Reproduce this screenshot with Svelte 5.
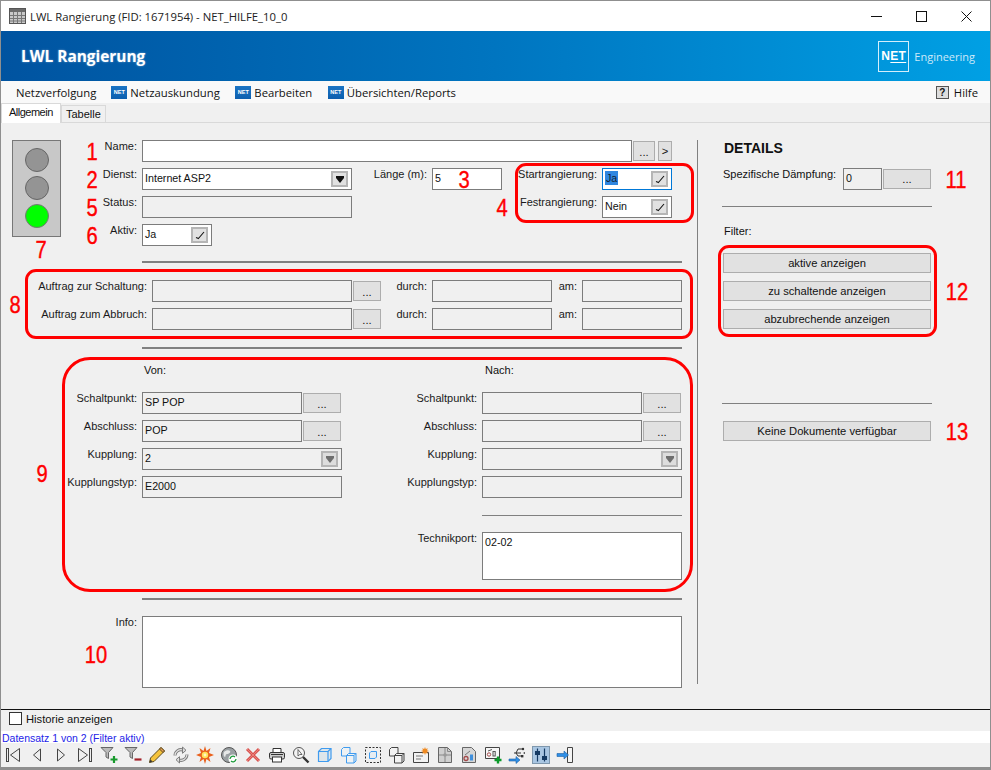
<script>
  let historie = $state(false);
  const menu = ['Netzauskundung', 'Bearbeiten', 'Übersichten/Reports'];
  const filters = ['aktive anzeigen', 'zu schaltende anzeigen', 'abzubrechende anzeigen'];
  const marks = [
    ['1', 91, 151], ['2', 91, 179], ['5', 91, 207], ['6', 91, 235], ['7', 40, 249],
    ['3', 463, 179], ['4', 501, 207], ['8', 14, 304], ['9', 41, 473], ['10', 95, 654],
    ['11', 955, 179], ['12', 956, 291], ['13', 956, 431]
  ];
</script>

{#snippet drop(dim)}
  <span class="pick" class:dim>
    <svg width="8" height="7" viewBox="0 0 8 7"><path d="M0 0h8v2L4 7 0 2z" fill="currentColor" /></svg>
  </span>
{/snippet}

{#snippet check()}
  <span class="pick">
    <svg width="10" height="10" viewBox="0 0 10 10"><path d="M1 7.500 L3.500 8.500 M3 9 L9 2" stroke="#111" stroke-width="1.100" fill="none" /></svg>
  </span>
{/snippet}

{#snippet more()}
  <button class="btn dots">...</button>
{/snippet}

{#snippet netIcon()}
  <span class="net-icon">NET</span>
{/snippet}

<div class="window">
  <header class="titlebar">
    <svg class="app-icon" width="17" height="16" viewBox="0 0 17 16">
      <rect x="0.5" y="0.5" width="16" height="15" fill="#c9c9c9" stroke="#555" />
      <rect x="1" y="1" width="15" height="3" fill="#6b6b6b" />
      <path d="M4.5 4v11M8.5 4v11M12.5 4v11M1 7.5h15M1 10.5h15M1 13h15" stroke="#777" stroke-width="1" />
    </svg>
    <span class="wintitle">LWL Rangierung (FID: 1671954) - NET_HILFE_10_0</span>
    <div class="winctl">
      <svg width="11" height="11" viewBox="0 0 11 11"><path d="M0 5.5h11" stroke="#111" /></svg>
      <svg width="11" height="11" viewBox="0 0 11 11"><rect x="0.5" y="0.5" width="10" height="10" fill="none" stroke="#111" /></svg>
      <svg width="11" height="11" viewBox="0 0 11 11"><path d="M0.5 0.5l10 10M10.5 0.5l-10 10" stroke="#111" /></svg>
    </div>
  </header>

  <div class="banner">
    <h1>LWL Rangierung</h1>
    <div class="logo">
      <div class="logo-box"><span>N<u>ET</u></span></div>
      <span class="logo-word">Engineering</span>
    </div>
  </div>

  <nav class="menubar">
    <span class="menu-first">Netzverfolgung</span>
    {#each menu as item}
      <span class="menu-item">{@render netIcon()}{item}</span>
    {/each}
    <span class="help"><span class="help-icon">?</span>Hilfe</span>
  </nav>

  <div class="tabs">
    <span class="tab active">Allgemein</span>
    <span class="tab">Tabelle</span>
  </div>

  <main class="page">
    <section class="left">
      <div class="top">
        <div class="light">
          <i></i><i></i><i class="on"></i>
        </div>
        <div class="top-fields">
          <div class="row">
            <span class="lbl w60">Name:</span>
            <span class="field white name"></span>
            <button class="btn dots small">...</button>
            <button class="btn next">&gt;</button>
          </div>
          <div class="row">
            <span class="lbl w60">Dienst:</span>
            <span class="field white w210">Internet ASP2 {@render drop(false)}</span>
            <span class="lbl w76">Länge (m):</span>
            <span class="field white w70 tight">5</span>
            <span class="lbl w100">Startrangierung:</span>
            <span class="field white w70 tight focus"><span class="sel">Ja</span> {@render check()}</span>
          </div>
          <div class="row">
            <span class="lbl w60">Status:</span>
            <span class="field w210"></span>
            <span class="lbl w250">Festrangierung:</span>
            <span class="field white w70 tight">Nein {@render check()}</span>
          </div>
          <div class="row">
            <span class="lbl w60">Aktiv:</span>
            <span class="field white w70">Ja {@render check()}</span>
          </div>
        </div>
      </div>

      <hr class="rule first" />

      <div class="orders">
        {#each ['Auftrag zur Schaltung:', 'Auftrag zum Abbruch:'] as label}
          <div class="row">
            <span class="lbl w147">{label}</span>
            <span class="field w200"></span>
            {@render more()}
            <span class="lbl w46">durch:</span>
            <span class="field w120"></span>
            <span class="lbl w30">am:</span>
            <span class="field w100"></span>
          </div>
        {/each}
      </div>

      <hr class="rule second" />

      <div class="ends">
        <div class="end">
          <div class="end-head">Von:</div>
          <div class="row"><span class="lbl w136">Schaltpunkt:</span><span class="field w160">SP POP</span>{@render more()}</div>
          <div class="row"><span class="lbl w136">Abschluss:</span><span class="field w160">POP</span>{@render more()}</div>
          <div class="row"><span class="lbl w136">Kupplung:</span><span class="field w200">2 {@render drop(true)}</span></div>
          <div class="row"><span class="lbl w136">Kupplungstyp:</span><span class="field w200">E2000</span></div>
        </div>
        <div class="end">
          <div class="end-head">Nach:</div>
          <div class="row"><span class="lbl w134">Schaltpunkt:</span><span class="field w160"></span>{@render more()}</div>
          <div class="row"><span class="lbl w134">Abschluss:</span><span class="field w160"></span>{@render more()}</div>
          <div class="row"><span class="lbl w134">Kupplung:</span><span class="field w200">{@render drop(true)}</span></div>
          <div class="row"><span class="lbl w134">Kupplungstyp:</span><span class="field w200"></span></div>
          <hr class="thin tech-rule" />
          <div class="row tall"><span class="lbl w134">Technikport:</span><span class="field white w200 area">02-02</span></div>
        </div>
      </div>

      <hr class="rule third" />

      <div class="row info"><span class="lbl w136">Info:</span><span class="field white w540"></span></div>
    </section>

    <div class="divider"></div>

    <aside class="details">
      <h2>DETAILS</h2>
      <div class="row damp">
        <span class="damp-lbl">Spezifische Dämpfung:</span>
        <span class="field w40">0</span>
        <button class="btn side">...</button>
      </div>
      <hr class="thin" />
      <div class="filter-lbl">Filter:</div>
      <div class="filters">
        {#each filters as f}
          <button class="btn wide">{f}</button>
        {/each}
      </div>
      <hr class="thin docs-rule" />
      <button class="btn wide">Keine Dokumente verfügbar</button>
    </aside>
  </main>

  <div class="history">
    <input type="checkbox" bind:checked={historie} />
    <span>Historie anzeigen</span>
  </div>
  <div class="record">Datensatz 1 von 2 (Filter aktiv)</div>

  <div class="toolbar">
    <span class="tb"><svg width="18" height="18" viewBox="0 0 18 18"><rect x="2.5" y="2.5" width="2" height="13" fill="#eee" stroke="#444" /><path d="M15.5 2.5 L6.5 9 15.5 15.5z" fill="#eee" stroke="#444" /></svg></span>
    <span class="tb"><svg width="18" height="18" viewBox="0 0 18 18"><path d="M12.5 3 L5.5 9 12.5 15z" fill="#eee" stroke="#444" /></svg></span>
    <span class="tb"><svg width="18" height="18" viewBox="0 0 18 18"><path d="M5.5 3 L12.5 9 5.5 15z" fill="#eee" stroke="#444" /></svg></span>
    <span class="tb"><svg width="18" height="18" viewBox="0 0 18 18"><path d="M2.5 2.5 L11.5 9 2.5 15.5z" fill="#eee" stroke="#444" /><rect x="13.5" y="2.5" width="2" height="13" fill="#eee" stroke="#444" /></svg></span>
    <span class="tb"><svg width="18" height="18" viewBox="0 0 18 18"><path d="M1 1.5h12L8.5 6.5v6L6 11V6.5z" fill="#bbb" stroke="#666" /><path d="M14 10v7M10.5 13.5h7" stroke="#17992c" stroke-width="2.2" /></svg></span>
    <span class="tb"><svg width="18" height="18" viewBox="0 0 18 18"><path d="M1 1.5h12L8.5 6.5v6L6 11V6.5z" fill="#bbb" stroke="#666" /><path d="M10.5 13.5h7" stroke="#a3222a" stroke-width="2.2" /></svg></span>
    <span class="tb"><svg width="18" height="18" viewBox="0 0 18 18"><path d="M13 1.5l3.5 3.5L6 15.5 1.5 16.5 2.5 12z" fill="#f5c33b" stroke="#5b4a1e" /><path d="M13 1.5l3.5 3.5-1.5 1.5L11.5 3z" fill="#e8a05a" stroke="#5b4a1e" /><path d="M1.5 16.5l1-3 2 2z" fill="#333" /></svg></span>
    <span class="tb"><svg width="18" height="18" viewBox="0 0 18 18" fill="none"><g stroke="#7d7d7d" stroke-width="3"><path d="M3 9.500a6 6 0 0 1 8-5.500" /><path d="M15 8.500a6 6 0 0 1-8 5.500" /></g><g stroke="#e2e2e2" stroke-width="1.200"><path d="M3 9.500a6 6 0 0 1 8-5.500" /><path d="M15 8.500a6 6 0 0 1-8 5.500" /></g><path d="M10.500 1l3.500 3.300-3.500 3z" fill="#ddd" stroke="#7d7d7d" /><path d="M7.500 17L4 13.700l3.500-3z" fill="#ddd" stroke="#7d7d7d" /></svg></span>
    <span class="tb"><svg width="18" height="18" viewBox="0 0 18 18"><path d="M9 0l1.500 5L14.500 2l-1.500 5 5 2-5 2 1.500 5-4-3L9 18l-1.500-5-4 3L5 11 0 9l5-2-1.500-5 4 3z" fill="#e9601c" /><circle cx="9" cy="9" r="3.200" fill="#ffe25a" /><circle cx="9" cy="9" r="1.400" fill="#fff6c8" /></svg></span>
    <span class="tb"><svg width="18" height="18" viewBox="0 0 18 18"><circle cx="9" cy="9" r="7.500" fill="#9aa0a3" stroke="#555" /><path d="M4 6c2-2 5-2 6-1s-1 3-3 3-1 3-2 3-2-3-1-5z" fill="#e6e8e8" /><circle cx="13" cy="13" r="4.500" fill="#fff" /><path d="M10 13a3 3 0 0 1 5-2M16 13a3 3 0 0 1-5 2" fill="none" stroke="#1c9a3a" stroke-width="1.300" /></svg></span>
    <span class="tb"><svg width="18" height="18" viewBox="0 0 18 18"><path d="M3 3l12 12M15 3L3 15" stroke="#d9534f" stroke-width="3" /><path d="M3 3l12 12M15 3L3 15" stroke="#ee8a85" stroke-width="0.800" /></svg></span>
    <span class="tb"><svg width="18" height="18" viewBox="0 0 18 18"><path d="M5 7V2.500h8V7" fill="#fff" stroke="#333" /><rect x="1.500" y="6.500" width="15" height="6.500" rx="1.500" fill="#ccc" stroke="#333" /><rect x="4.500" y="11" width="9" height="5" fill="#fff" stroke="#333" /><path d="M3 8.500h12" stroke="#333" /></svg></span>
    <span class="tb"><svg width="18" height="18" viewBox="0 0 18 18"><circle cx="7" cy="7" r="5.500" fill="#f4f4f4" stroke="#555" /><path d="M6 3.500v6.500l1.800-1.500h2.200z" fill="#fff" stroke="#444" stroke-width="0.800" /><path d="M11 11l5.500 5.500" stroke="#333" stroke-width="2.400" /></svg></span>
    <span class="tb"><svg width="18" height="18" viewBox="0 0 18 18"><path d="M2.500 5.500l3-3h9.500v10l-3 3H2.500z" fill="#dfe6ea" stroke="#3f9bef" stroke-width="1.200" /><path d="M2.500 5.500h9.500v10M12 5.500l3-3" fill="none" stroke="#3f9bef" stroke-width="1.200" /></svg></span>
    <span class="tb"><svg width="18" height="18" viewBox="0 0 18 18" fill="#eef2f4" stroke="#3f9bef"><path d="M1.500 3.500l2-2h6.500v6.500l-2 2H1.500z" /><path d="M6.500 9.500l2-2h7.500v7.500l-2 2H6.500z" /><path d="M6.500 9.500h7.500v7.500M14 9.500l2-2" fill="none" /></svg></span>
    <span class="tb"><svg width="18" height="18" viewBox="0 0 18 18"><rect x="1.500" y="1.500" width="15" height="15" fill="none" stroke="#333" stroke-dasharray="2 1.500" /><path d="M5.500 7l1.500-1.500h5.500V11L11 12.500H5.500z" fill="#e6edf2" stroke="#3f9bef" /></svg></span>
    <span class="tb"><svg width="18" height="18" viewBox="0 0 18 18" fill="#f2f2f2" stroke="#444"><path d="M1.500 3.500l2-2h6.500v6.500l-2 2H1.500z" /><path d="M6.500 9.500l2-2h7.500v7.500l-2 2H6.500z" /><path d="M6.500 9.500h7.500v7.500M14 9.500l2-2" fill="none" /></svg></span>
    <span class="tb"><svg width="18" height="18" viewBox="0 0 18 18"><path d="M1.500 6.500h15v10h-15z" fill="#f2f2f2" stroke="#444" /><path d="M4 10h7M4 13h5" stroke="#777" /><path d="M13 1l.8 2 2-.8-.8 2 2 .8-2 .8.800 2-2-.8-.8 2-.8-2-2 .8.800-2-2-.8 2-.8-.8-2 2 .8z" fill="#ef8a22" /></svg></span>
    <span class="tb"><svg width="18" height="18" viewBox="0 0 18 18"><path d="M2.500 1.500h9l4 4v11h-13z" fill="#cfcfcf" stroke="#666" /><path d="M11.500 1.500v4h4M9 2v14M3 9h12" fill="none" stroke="#888" /><circle cx="9" cy="9" r="1.800" fill="#999" /></svg></span>
    <span class="tb"><svg width="18" height="18" viewBox="0 0 18 18"><path d="M2.500 1.500h9l4 4v11h-13z" fill="#d6d6d6" stroke="#666" /><circle cx="6" cy="12.500" r="2" fill="none" stroke="#a34a4a" stroke-width="1.300" /><rect x="10" y="8.500" width="3" height="6" fill="#3f8fdc" /><path d="M5 9l5-4" stroke="#777" /></svg></span>
    <span class="tb"><svg width="18" height="18" viewBox="0 0 18 18"><path d="M1.500 1.500h14v11h-14z" fill="#f6f6f6" stroke="#444" /><circle cx="5" cy="8.500" r="1.700" fill="none" stroke="#a34a4a" /><rect x="9" y="5.500" width="2.200" height="4.500" fill="none" stroke="#555" /><path d="M4 5l4-1.500" stroke="#555" /><path d="M14 10.500v7M10.500 14h7" stroke="#0a9a2a" stroke-width="2.400" /></svg></span>
    <span class="tb"><svg width="18" height="18" viewBox="0 0 18 18"><path d="M6 7h7M8 7l2-4h4M8 7l2 3h3" fill="none" stroke="#333" /><circle cx="15" cy="3" r="1.200" fill="#333" /><rect x="13" y="9" width="2.400" height="2.400" fill="#333" /><path d="M15 7l2-1v2z" fill="#333" /><path d="M1 13h7V10.500l4 3.500-4 3.500V15H1z" fill="#2f8fe6" stroke="#1c5fa5" stroke-width="0.600" /></svg></span>
    <span class="tb"><svg width="18" height="18" viewBox="0 0 18 18"><rect x="0.500" y="0.500" width="17" height="17" fill="#a9c6e2" stroke="#7e97ad" /><path d="M5.500 2.500v13M12.500 2.500v13" stroke="#153a63" stroke-width="1.200" /><rect x="3" y="5" width="5" height="4" fill="#153a63" /><rect x="10" y="10" width="5" height="4" fill="#153a63" /></svg></span>
    <span class="tb"><svg width="18" height="18" viewBox="0 0 18 18"><path d="M11.500 1.500h5v15h-5" fill="#f4f4f4" stroke="#444" /><path d="M11.500 1.500v15" stroke="#444" /><path d="M1 7.500h7V5l4.500 4L8 13v-2.500H1z" fill="#2f8fe6" stroke="#1c5fa5" stroke-width="0.600" /></svg></span>
  </div>

  <!-- Callouts drawn on top of the screenshot -->
  <div class="frame f4"></div>
  <div class="frame f8"></div>
  <div class="frame f9"></div>
  <div class="frame f12"></div>
  {#each marks as [n, x, y]}
    <span class="mark" style="left:{x}px;top:{y}px">{n}</span>
  {/each}
</div>

<style>
  :global(body) {
    margin: 0;
    background: #f0f0f0;
  }

  .window {
    position: relative;
    box-sizing: border-box;
    width: 991px;
    height: 770px;
    display: flex;
    flex-direction: column;
    overflow: hidden;
    border: 1px solid #8f8f8f;
    border-bottom-width: 3px;
    background: #f0f0f0;
    color: #111;
    font-family: "Liberation Sans", Arial, sans-serif;
    font-size: 11px;
  }

  .titlebar {
    height: 30px;
    flex: none;
    display: flex;
    align-items: center;
    background: #fff;
    font-family: "Open Sans", sans-serif;
    font-size: 11.3px;
  }

  .app-icon {
    margin-left: 8px;
    margin-right: 4px;
  }

  .wintitle {
    color: #222;
  }

  .winctl {
    margin-left: auto;
    margin-right: 18px;
    display: flex;
    gap: 34px;
  }

  .banner {
    height: 50px;
    flex: none;
    display: flex;
    align-items: center;
    justify-content: space-between;
    background: linear-gradient(90deg, #0053a0 0%, #0075c0 50%, #00a0e4 100%);
    color: #fff;
  }

  h1 {
    margin: 0 0 0 20px;
    font-family: "Open Sans", sans-serif;
    font-size: 15.4px;
    font-weight: 700;
    text-shadow: 0 0 2px rgba(255, 255, 255, 0.5);
  }

  .logo {
    display: flex;
    align-items: center;
    gap: 5px;
    margin-right: 15px;
  }

  .logo-box {
    box-sizing: border-box;
    width: 31px;
    height: 31px;
    border: 1px solid #d4eefb;
    display: flex;
    align-items: center;
    justify-content: center;
    font-weight: 700;
    font-size: 12px;
    letter-spacing: 0.3px;
  }

  .logo-box u {
    text-underline-offset: 2px;
  }

  .logo-word {
    font-family: "Open Sans", sans-serif;
    font-size: 11px;
    color: #cde9f9;
  }

  .menubar {
    height: 22px;
    flex: none;
    display: flex;
    align-items: center;
    background: #f9f9f9;
    font-family: "Open Sans", sans-serif;
    font-size: 11.3px;
    color: #111;
  }

  .menu-first {
    margin-left: 15px;
    margin-right: 15px;
  }

  .menu-item {
    display: flex;
    align-items: center;
    gap: 3px;
    margin-right: 15.5px;
  }

  .net-icon {
    box-sizing: border-box;
    width: 16px;
    height: 13px;
    background: linear-gradient(180deg, #1a74c4 0%, #0d5fae 100%);
    color: #fff;
    font-family: "Liberation Sans", sans-serif;
    font-size: 5.5px;
    font-weight: 700;
    line-height: 13px;
    text-align: center;
  }

  .help {
    margin-left: auto;
    margin-right: 12px;
    display: flex;
    align-items: center;
    gap: 5px;
  }

  .help-icon {
    box-sizing: border-box;
    width: 13px;
    height: 13px;
    border: 1px solid #555;
    background: #ddd;
    font: 700 10px/11px "Liberation Sans", sans-serif;
    text-align: center;
  }

  .tabs {
    height: 20px;
    flex: none;
    display: flex;
    align-items: flex-end;
    box-sizing: border-box;
    border-bottom: 1px solid #d9d9d9;
    font-size: 11px;
  }

  .tab {
    box-sizing: border-box;
    height: 17px;
    padding: 0 4px;
    line-height: 16px;
    border: 1px solid #d9d9d9;
    border-bottom: none;
    background: #f0f0f0;
  }

  .tab.active {
    height: 20px;
    width: 60px;
    padding: 0 0 0 7px;
    margin-bottom: -1px;
    line-height: 17px;
    letter-spacing: -0.5px;
    background: #fff;
    border-right: 1px solid #d9d9d9;
  }

  .page {
    flex: none;
    height: 587px;
    display: flex;
    box-sizing: border-box;
    border-bottom: 1px solid #111;
  }

  .left {
    box-sizing: border-box;
    width: 696px;
    padding-top: 17px;
  }

  .row {
    display: flex;
    height: 22px;
    margin-bottom: 6px;
  }

  .lbl {
    flex: none;
    box-sizing: border-box;
    padding-right: 5px;
    text-align: right;
    line-height: 12px;
    white-space: nowrap;
    color: #1a1a1a;
  }

  .w60 { width: 65px; }
  .w76 { width: 80px; }
  .w100 { width: 100px; }
  .w250 { width: 250px; }
  .w147 { width: 151px; }
  .w46 { width: 51px; }
  .w30 { width: 30px; }
  .w136 { width: 141px; }
  .w134 { width: 140px; }

  .field {
    flex: none;
    box-sizing: border-box;
    display: flex;
    align-items: center;
    height: 22px;
    padding: 0 2px 2px;
    border: 1px solid #7c7c7c;
    position: relative;
    font-size: 10.7px;
    white-space: pre;
  }

  .white { background: #fff; }
  .name { width: 490px; }
  .w210 { width: 210px; }
  .w70 { width: 70px; }
  .w200 { width: 200px; }
  .w160 { width: 160px; }
  .w120 { width: 120px; }
  .w100.field { width: 100px; }
  .w40 { width: 39px; }
  .w540 { width: 540px; }

  .tight { padding-left: 2px; }
  .focus { border-color: #0078d7; }

  .sel {
    background: #2f86e0;
    color: #123;
    padding: 0 1px;
    line-height: 14px;
  }

  .pick {
    box-sizing: border-box;
    position: absolute;
    right: 3px;
    top: 2px;
    width: 17px;
    height: 16px;
    display: flex;
    align-items: center;
    justify-content: center;
    background: #e1e1e1;
    border: 2px solid #b5b5b5;
    color: #111;
  }

  .pick.dim {
    color: #6f6f6f;
    background: #ddd;
  }

  .btn {
    flex: none;
    box-sizing: border-box;
    height: 20px;
    margin: 1px 0 0 1px;
    padding: 0;
    border: 1px solid #adadad;
    background: #e1e1e1;
    font-family: "Liberation Sans", Arial, sans-serif;
    font-size: 11.2px;
    color: #111;
  }

  .dots {
    width: 28px;
    line-height: 20px;
  }

  .ends .dots { width: 38px; }
  .dots.small { width: 22px; margin-left: 1px; }
  .next { width: 14px; margin-left: 3px; }

  .top {
    display: flex;
  }

  .light {
    box-sizing: border-box;
    flex: none;
    width: 49px;
    height: 97px;
    margin: 0 -37px 0 11px;
    border: 1px solid #777;
    background: #c8c8c8;
    display: flex;
    flex-direction: column;
    align-items: center;
    gap: 4px;
    padding-top: 7px;
  }

  .light i {
    box-sizing: border-box;
    width: 24px;
    height: 24px;
    border-radius: 50%;
    background: #949494;
    border: 1px solid #666;
  }

  .light i.on {
    background: #00ff00;
    border-color: #777;
  }

  .top-fields {
    margin-left: 53px;
    flex: 1;
    min-width: 0;
  }

  .rule {
    height: 2px;
    width: 540px;
    margin: 0 0 0 141px;
    border: none;
    background: #808080;
  }

  .rule.first { margin-top: 9px; }
  .rule.second { margin-top: 17px; }

  .orders {
    padding-top: 17px;
  }

  .ends {
    display: grid;
    grid-template-columns: 341px 341px;
    align-items: start;
    height: 249px;
  }

  .end-head {
    height: 43px;
    padding: 15px 0 0 143px;
    box-sizing: border-box;
    line-height: 12px;
  }

  .thin {
    height: 1px;
    margin: 0;
    border: none;
    background: #808080;
  }

  .tech-rule {
    width: 200px;
    margin: 17px 0 16px 140px;
  }

  .tall {
    height: 48px;
  }

  .area {
    height: 48px;
    align-items: flex-start;
    padding-top: 3px;
  }

  .info {
    margin-top: 16px;
    height: 72px;
  }

  .info .field {
    height: 72px;
  }

  .divider {
    flex: none;
    width: 1px;
    height: 544px;
    margin-top: 17px;
    background: #808080;
  }

  .details {
    box-sizing: border-box;
    width: 210px;
    margin-left: 25px;
    padding-top: 17px;
  }

  h2 {
    margin: 0 0 0 1px;
    font-size: 14px;
    line-height: 16px;
    font-weight: 700;
    color: #111;
  }

  .damp {
    margin: 12px 0 16px;
  }

  .damp-lbl {
    width: 120px;
    flex: none;
    line-height: 12px;
    padding-top: 0;
    white-space: nowrap;
  }

  .btn.side {
    width: 48px;
  }

  .details .thin {
    margin-left: -1px;
    width: 210px;
  }

  .filter-lbl {
    margin: 18px 0 16px 1px;
    line-height: 12px;
  }

  .filters {
    display: flex;
    flex-direction: column;
    gap: 8px;
  }

  .wide {
    width: 208px;
    margin: 0;
  }

  .docs-rule {
    margin-top: 74px !important;
    margin-bottom: 17px !important;
  }

  .history {
    height: 21px;
    flex: none;
    box-sizing: border-box;
    display: flex;
    align-items: center;
    gap: 4px;
    padding: 0 0 4px 8px;
    font-size: 11.2px;
  }

  .history input {
    appearance: none;
    box-sizing: border-box;
    width: 13px;
    height: 13px;
    margin: 0;
    background: #fff;
    border: 1px solid #333;
  }

  .record {
    height: 12px;
    flex: none;
    padding-left: 1px;
    background: #fff;
    color: #2424e8;
    font-size: 10.5px;
    line-height: 14px;
  }

  .toolbar {
    flex: 1;
    display: flex;
    align-items: center;
  }

  .tb {
    width: 24px;
    flex: none;
    display: flex;
    justify-content: center;
  }

  .frame {
    position: absolute;
    box-sizing: border-box;
    border: 3px solid #f00;
    border-radius: 11px;
  }

  .f4 { left: 514px; top: 162px; width: 179px; height: 60px; }
  .f8 { left: 24px; top: 268px; width: 668px; height: 70px; }
  .f9 { left: 61px; top: 356px; width: 631px; height: 235px; border-radius: 28px; }
  .f12 { left: 717px; top: 244px; width: 219px; height: 92px; }

  .mark {
    position: absolute;
    transform: translate(-50%, -50%) scaleX(0.84);
    color: #f00;
    font-size: 24px;
    line-height: 24px;
    -webkit-text-stroke: 0.4px #f00;
  }
</style>
